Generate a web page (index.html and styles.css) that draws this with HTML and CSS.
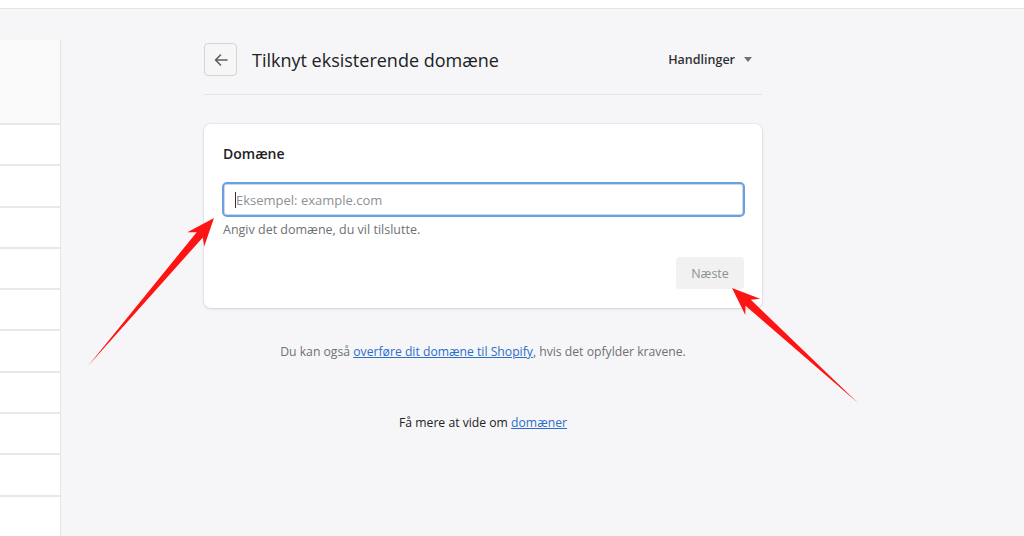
FILE: index.html
```html
<!DOCTYPE html>
<html lang="da">
<head>
    <meta charset="UTF-8">
    <meta name="viewport" content="width=device-width, initial-scale=1.0">
    <title>Tilknyt eksisterende domæne</title>
    <link rel="stylesheet" href="styles.css">
</head>
<body>
    <div class="topbar"></div>
    <div class="page">
        <div class="sidebar">
            <div class="side-head"></div>
            <div class="side-row"></div>
            <div class="side-row"></div>
            <div class="side-row"></div>
            <div class="side-row"></div>
            <div class="side-row"></div>
            <div class="side-row"></div>
            <div class="side-row"></div>
            <div class="side-row"></div>
            <div class="side-row"></div>
            <div class="side-row"></div>
        </div>
        <div class="main">
            <div class="header">
                <button type="button" class="back">
                    <svg width="16" height="16" viewBox="0 0 16 16"><path d="M14 8H2.5M7.5 3L2.5 8l5 5" fill="none" stroke="#5c5f62" stroke-width="1.6" stroke-linecap="round" stroke-linejoin="round"/></svg>
                </button>
                <h1 class="title">Tilknyt eksisterende domæne</h1>
                <div class="actions">Handlinger <span class="caret"></span></div>
            </div>
            <div class="card">
                <div class="label">Domæne</div>
                <div class="field"><span class="cursor"></span><span class="placeholder">Eksempel: example.com</span></div>
                <div class="help">Angiv det domæne, du vil tilslutte.</div>
                <div class="card-foot">
                    <button type="button" class="next">Næste</button>
                </div>
            </div>
            <p class="note">Du kan også <a href="#">overføre dit domæne til Shopify</a>, hvis det opfylder kravene.</p>
            <p class="more">Få mere at vide om <a href="#">domæner</a></p>
        </div>
    </div>
    <svg class="arrows" width="1024" height="536" viewBox="0 0 1024 536">
        <polygon points="88,366 196.7,232.2 187.4,232.2 214,218 204.2,246.4 202.8,237.4" fill="#ff1414"/>
        <polygon points="858,403 745.5,305.8 745.3,315 732,288 760.1,298.8 750.9,299.8" fill="#ff1414"/>
    </svg>
</body>
</html>
```

FILE: styles.css
```css
*{
    box-sizing: border-box;
}
body{
    margin: 0;
    background-color: #f6f6f8;
    font-family: "Open Sans", "Noto Sans", sans-serif;
    color: #202223;
    height: 536px;
    overflow: hidden;
    position: relative;
}
.topbar{
    height: 9px;
    background-color: #fff;
    border-bottom: 1px solid #e4e5e7;
}
.page{
    display: flex;
    align-items: flex-start;
}
.sidebar{
    width: 61px;
    margin-top: 31px;
    border-right: 1px solid #e6e6e6;
}
.side-head{
    height: 83px;
    background-color: #f9f9f9;
}
.side-row{
    height: 41.3px;
    background-color: #fff;
    border-top: 2px solid #e8e8e8;
}
.main{
    width: 558px;
    margin-left: 143px;
    padding-top: 34px;
}
.header{
    display: flex;
    align-items: center;
    padding-bottom: 18px;
    border-bottom: 1px solid #e1e3e5;
}
.back{
    width: 33px;
    height: 33px;
    padding: 0;
    border: 1px solid #d2d4d6;
    border-radius: 4px;
    background-color: #f6f6f7;
    display: flex;
    align-items: center;
    justify-content: center;
}
.title{
    margin: 0 0 0 15px;
    font-size: 18px;
    font-weight: 500;
    flex: 1;
}
.actions{
    font-size: 12.5px;
    font-weight: 600;
    color: #303235;
    display: flex;
    align-items: center;
    padding-right: 10px;
}
.caret{
    margin-left: 9px;
    width: 0;
    height: 0;
    border-left: 4px solid transparent;
    border-right: 4px solid transparent;
    border-top: 5px solid #6d7175;
}
.card{
    margin-top: 29px;
    background-color: #fff;
    border-radius: 7px;
    box-shadow: 0 0 0 1px rgba(63,63,68,0.05), 0 1px 3px rgba(63,63,68,0.15);
    padding: 20px 17px 19px 18px;
}
.label{
    font-size: 14px;
    font-weight: 600;
    line-height: 20px;
    padding-left: 1px;
}
.field{
    margin-top: 18px;
    height: 35px;
    border: 2px solid #6c9fe0;
    border-radius: 5px;
    display: flex;
    align-items: center;
    padding-left: 11px;
    box-shadow: inset 0 0 0 1px #c9d9f0;
}
.cursor{
    width: 1px;
    height: 16px;
    background-color: #303235;
}
.placeholder{
    font-size: 13px;
    color: #8c9196;
}
.help{
    margin-top: 4px;
    font-size: 12.5px;
    color: #6d7175;
    padding-left: 1px;
}
.card-foot{
    display: flex;
    justify-content: flex-end;
    margin-top: 19px;
}
.next{
    width: 68px;
    height: 32px;
    border: none;
    border-radius: 4px;
    background-color: #f1f1f1;
    color: #8c9196;
    font-family: inherit;
    font-size: 12.5px;
    margin-right: 1px;
}
.note{
    margin: 35px 0 0;
    text-align: center;
    font-size: 12.2px;
    color: #6d7175;
}
.more{
    margin: 54px 0 0;
    text-align: center;
    font-size: 12.2px;
    color: #202223;
}
a{
    color: #2c6ecb;
}
.arrows{
    position: absolute;
    left: 0;
    top: 0;
    pointer-events: none;
}
```
